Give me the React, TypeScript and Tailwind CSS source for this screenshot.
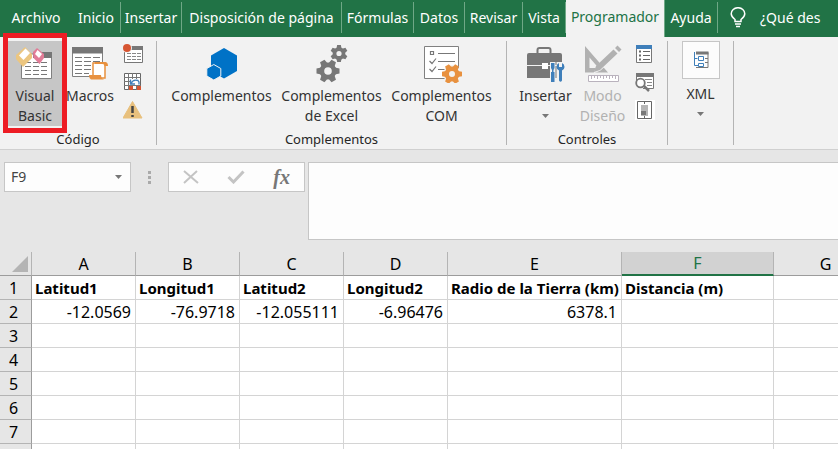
import type { ReactNode } from "react";

const UI = "font-['Noto_Sans',sans-serif]";

type TabItem = { label: string; width: string; active?: boolean; plain?: boolean };

const tabs: TabItem[] = [
  { label: "Archivo", width: "w-[72px]", plain: true },
  { label: "Inicio", width: "w-[49px]" },
  { label: "Insertar", width: "w-[61px]" },
  { label: "Disposición de página", width: "w-[160px]" },
  { label: "Fórmulas", width: "w-[72px]" },
  { label: "Datos", width: "w-[51px]" },
  { label: "Revisar", width: "w-[58px]" },
  { label: "Vista", width: "w-[43px]" },
  { label: "Programador", width: "w-[99px]", active: true },
  { label: "Ayuda", width: "w-[53px]" },
];

function Tabs() {
  return (
    <nav className="flex h-[37px] items-stretch bg-[#217346] text-sm text-white">
      {tabs.map((t) =>
        t.active ? (
          <button key={t.label} className={`${t.width} flex shrink-0 items-start justify-center border-r border-[#6fa886] bg-[#f2f2f2] bg-clip-padding pt-[7px] text-[#217346]`}>
            {t.label}
          </button>
        ) : (
          <button
            key={t.label}
            className={`${t.width} mt-[2px] flex h-[31px] shrink-0 items-center justify-center whitespace-nowrap ${t.plain ? "" : "border-r border-[#6fa886]"}`}
          >
            {t.label}
          </button>
        ),
      )}
      <button className="mt-[2px] flex h-[31px] shrink-0 items-center gap-[14px] pl-3 whitespace-nowrap">
        <svg width="16" height="21" viewBox="0 0 16 21" fill="none" stroke="white" strokeWidth="1.5">
          <path d="M5 14.5v-2C3 11 1.2 9.500 1.200 6.800A6.700 6 0 0 1 14.800 6.800C14.800 9.500 13 11 11 12.500v2z" />
          <path d="M5 17h6M6 19.500h4" />
        </svg>
        ¿Qué des
      </button>
    </nav>
  );
}

function Gear({ cx, cy, r, hole, color, turn = 0 }: { cx: number; cy: number; r: number; hole: number; color: string; turn?: number }) {
  const body = r * 0.74;
  return (
    <g fill={color}>
      <circle cx={cx} cy={cy} r={(body + hole) / 2} fill="none" stroke={color} strokeWidth={body - hole} />
      {Array.from({ length: 6 }, (_, i) => (
        <path
          key={i}
          transform={`rotate(${60 * i + turn} ${cx} ${cy})`}
          d={`M${cx - r * 0.3} ${cy - r * 0.6}L${cx - r * 0.22} ${cy - r}H${cx + r * 0.22}L${cx + r * 0.3} ${cy - r * 0.6}z`}
        />
      ))}
    </g>
  );
}

const VisualBasicIcon = () => (
  <svg width="38" height="34" viewBox="17 45 38 34">
    <path d="M22.500 52h30v24.500h-30z" fill="#fff" stroke="#808080" />
    <path d="M34 50h19v6H34z" fill="#767676" />
    <path d="M26 60.500h24M26 64.500h24M26 68.500h24M26 72.500h24" stroke="#777" strokeDasharray="6 2" />
    <path d="M26 45l7 7v4l-9 9-7-8v-4z" fill="#ecc680" />
    <path d="M26.500 46.500l4.500 4.500-6.500 7-4.500-4.500z" fill="#fff" />
    <path d="M38 46l7 6v4l-4.500 6-6-6-.5-6z" fill="#e27c97" />
    <path d="M38.500 48l4.500 4-3 4-4-4z" fill="#fff" />
  </svg>
);

const MacrosIcon = () => (
  <svg width="38" height="34" viewBox="71 48 38 34">
    <path d="M72.500 48.500h30v29h-30z" fill="#fff" stroke="#808080" />
    <path d="M72 48h31v6.500H72z" fill="#767676" />
    <path d="M75 58.500h25M75 62.500h25M75 66.500h16M75 70.500h16M75 74.500h14" stroke="#777" strokeDasharray="7 2" />
    <path d="M93 64h12v15H93z" fill="#fff" stroke="#e8913f" strokeWidth="1.500" />
    <path d="M95 63h10q3 0 3 4h-3.500q0-2-2-2H95zM89 76h12q0 3 3 4.500H91q-2-1-2-4.500z" fill="#e8913f" />
  </svg>
);

const RecordIcon = () => (
  <svg width="20" height="20" viewBox="123 44 20 20">
    <path d="M124.500 47.500h18v15h-18z" fill="#fff" stroke="#777" />
    <path d="M124 46h19v4h-19z" fill="#777" />
    <path d="M127 53.500h14M127 56.500h14M127 59.500h14" stroke="#888" strokeDasharray="4 1" />
    <circle cx="127" cy="48" r="5" fill="#f2f2f2" />
    <circle cx="127" cy="48" r="4" fill="#d65532" />
  </svg>
);

const RelativeIcon = () => (
  <svg width="20" height="20" viewBox="123 72 20 20">
    <path d="M124.500 73.500h16v16h-16z" fill="#fff" stroke="#666" />
    <path d="M128.500 73v17M132.500 73v6M136.500 73v6M124 77.500h17M124 81.500h6M124 85.500h17M132.500 85v5M136.500 85v5" stroke="#777" />
    <path d="M129 86h4v4h-4zM137 86h4v4h-4z" fill="#d65532" />
    <path d="M130 79h10v6h-10z" fill="#fff" />
    <path d="M131 83.500q2-4.500 7-3 1.500 1 1 4M130.500 79.500v4.500h4.500" fill="none" stroke="#3f7fba" strokeWidth="1.400" />
  </svg>
);

const WarningIcon = () => (
  <svg width="20" height="20" viewBox="123 100 20 20">
    <path d="M132.500 101.500L142 118h-19z" fill="#e8c07d" stroke="#e8c07d" strokeLinejoin="round" />
    <path d="M132.500 106v7M132.500 115v2" stroke="#444" strokeWidth="2.500" />
  </svg>
);

const HexIcon = () => (
  <svg width="34" height="34" viewBox="204 46 34 34" fill="#0072c6">
    <path d="M223 47l13 7.500v15.500l-13 7.500-13-7.500V54.500z" />
    <path d="M212.800 63.500l7 4v7.500l-7 4-7-4v-7.500z" stroke="#f2f2f2" />
  </svg>
);

const GearsIcon = () => (
  <svg width="34" height="38" viewBox="315 44 34 38">
    <Gear cx={328} cy={70} r={11.5} hole={3.800} color="#777" turn={30} />
    <Gear cx={339} cy={52.5} r={8.5} hole={2.600} color="#777" />
  </svg>
);

const ComIcon = () => (
  <svg width="40" height="38" viewBox="422 44 40 38">
    <path d="M424.500 45.500h34v32h-34z" fill="#fff" stroke="#808080" />
    <path d="M430.500 50.500h3v3h-3zM438 52.500h17M438 60.500h17M438 68.500h8M429.500 60l2.500 2.500 4-5M429.500 68l2.500 2.500 4-5" fill="none" stroke="#777" strokeWidth="1.200" />
    <circle cx="452" cy="73" r="9" fill="#f2f2f2" />
    <Gear cx={452} cy={73} r={10} hole={3} color="#e8913f" turn={30} />
  </svg>
);

const ToolboxIcon = () => (
  <svg width="40" height="38" viewBox="527 45 40 38">
    <path d="M538.500 53v-3q0-2 2-2h9q2 0 2 2v3" fill="none" stroke="#777" strokeWidth="2" />
    <path d="M530 53h31q2 0 2 2v23h-35V55q0-2 2-2z" fill="#777" />
    <path d="M528 65.500h35" stroke="#f2f2f2" />
    <path d="M543 63h6v6h-6z" fill="#fff" />
    <path d="M551 62h5.500v20H551zM557.500 62h8v20h-8z" fill="#f2f2f2" />
    <path d="M552 63h3.500v5l-1 2v2h1v10H552V72h1v-2l-1-2z" fill="#3f7fba" />
    <path d="M560 63v4h3v-4q2.500 1 2.500 4 0 2-2.500 3.500v10q-1.500 2.500-3 0v-10q-2.500-1.500-2.500-3.500 0-3 2.500-4z" fill="#3f7fba" />
  </svg>
);

const DesignIcon = () => (
  <svg width="40" height="38" viewBox="582 44 40 38">
    <path d="M584 45l23 26.500h-23zM588.500 56.500v10.500h9z" fill="#b1b1b1" fillRule="evenodd" />
    <path d="M611 48l6 6-17.500 15.500-7 3 3-7z" fill="#f2f2f2" />
    <path d="M616.500 44.500l4 4-2.500 2.500-4-4zM612.500 48.500l4 4-17.500 16.500-6 2 2-6z" fill="#b1b1b1" />
    <path d="M587.500 74.500h30v6h-30z" fill="#fff" stroke="#b9b2bd" />
    <path d="M590.500 75v3M593.500 75v2M596.500 75v3M599.500 75v2M602.500 75v3M605.500 75v2M608.500 75v3M611.500 75v2M614.500 75v3" stroke="#b9b2bd" />
  </svg>
);

const PropertiesIcon = () => (
  <svg width="20" height="20" viewBox="635 44 20 20">
    <path d="M636.500 45.500h15v17h-15z" fill="#fff" stroke="#777" />
    <path d="M636 45h16v4h-16z" fill="#3f7fba" />
    <path d="M643 51.500h7M643 55.500h7M643 59.500h7" stroke="#666" />
    <path d="M639 50.500h2v2h-2zM639 54.500h2v2h-2zM639 58.500h2v2h-2z" fill="#666" />
  </svg>
);

const ViewCodeIcon = () => (
  <svg width="20" height="20" viewBox="634 73 20 20">
    <path d="M635.500 75.500h17v14h-17z" fill="#fff" stroke="#777" />
    <path d="M635 74h18v4h-18z" fill="#777" />
    <path d="M644 80.500h7M646 83.500h5M646 86.500h5" stroke="#888" />
    <path d="M634 85h8v8h-8z" fill="#f2f2f2" />
    <circle cx="639.500" cy="84" r="4.300" fill="#fff" stroke="#777" strokeWidth="1.800" />
    <path d="M643 87l5 5" stroke="#777" strokeWidth="2.500" />
  </svg>
);

const DialogIcon = () => (
  <svg width="20" height="20" viewBox="635 100 20 20">
    <path d="M635 100h20v20h-20z" fill="#fff" />
    <path d="M637.500 101.500h14v17h-14z" fill="#fff" stroke="#666" />
    <path d="M641 105h7v11h-7z" fill="#b5b5b5" />
    <path d="M641 111h5v4h-5z" fill="#777" />
    <path d="M644.500 101v3M644.500 116v3" stroke="#666" />
  </svg>
);

const XmlIcon = () => (
  <svg width="18" height="18" viewBox="692 51 18 18">
    <path d="M696 52.500h12v15h-12" fill="none" stroke="#777" />
    <path d="M696 51.500h12.500v3H696z" fill="#777" />
    <path d="M694.500 52v13.500h4M694.500 58.500h3M698.500 56.500h5v4h-5zM698.500 63.500h5v3h-5z" fill="#fff" stroke="#3f7fba" />
    <path d="M705 58.500h3M705 62.500h3" stroke="#777" />
  </svg>
);

const Caret = () => (
  <svg width="7" height="4" viewBox="0 0 7 4" fill="#777">
    <path d="M0 0h7L3.500 4z" />
  </svg>
);

function Group({ label, className, children }: { label: string; className: string; children: ReactNode }) {
  return (
    <section aria-label={label} className={`${className} flex shrink-0 flex-col border-r border-[#b4b4b4]`}>
      <div className="flex h-[88px] shrink-0 justify-center">{children}</div>
      <div className="flex shrink-0 items-center justify-center text-[13px] leading-5 text-[#262626]">{label}</div>
    </section>
  );
}

function BigButton({ icon, lines, width, tone = "text-[#333]", caret = false }: { icon: ReactNode; lines: string[]; width: string; tone?: string; caret?: boolean }) {
  return (
    <button className={`${width} ${tone} flex h-[85px] shrink-0 flex-col items-center text-sm leading-5`}>
      <span className="flex h-[45px] items-center justify-center">{icon}</span>
      {lines.map((l) => (
        <span key={l} className="whitespace-nowrap">{l}</span>
      ))}
      {caret && (
        <span className="flex h-5 items-center">
          <Caret />
        </span>
      )}
    </button>
  );
}

function SmallButtons({ items }: { items: { label: string; icon: ReactNode }[] }) {
  return (
    <div className="flex shrink-0 flex-col gap-2 pt-[3px]">
      {items.map((i) => (
        <button key={i.label} aria-label={i.label} className="h-5 w-5">
          {i.icon}
        </button>
      ))}
    </div>
  );
}

function Ribbon() {
  return (
    <div className="flex h-[113px] border-b border-[#d0d0d0] bg-[#f2f2f2] pt-1 pb-1">
      <Group label="Código" className="w-[157px]">
        <div className="relative ml-[3px] flex w-16 shrink-0 justify-center">
          <div className="h-[85px] w-[54px] bg-[#c6c6c6]">
            <BigButton icon={<VisualBasicIcon />} lines={["Visual", "Basic"]} width="w-[54px]" />
          </div>
          <div className="pointer-events-none absolute -top-2 left-0 h-[100px] w-16 border-5 border-[#ed1c24]" />
        </div>
        <BigButton icon={<MacrosIcon />} lines={["Macros"]} width="w-[46px]" />
        <div className="w-[43px] shrink-0 pl-[10px]">
          <SmallButtons
            items={[
              { label: "Grabar macro", icon: <RecordIcon /> },
              { label: "Usar referencias relativas", icon: <RelativeIcon /> },
              { label: "Seguridad de macros", icon: <WarningIcon /> },
            ]}
          />
        </div>
      </Group>
      <Group label="Complementos" className="w-[350px]">
        <BigButton icon={<HexIcon />} lines={["Complementos"]} width="w-[110px]" />
        <BigButton icon={<GearsIcon />} lines={["Complementos", "de Excel"]} width="w-[110px]" />
        <BigButton icon={<ComIcon />} lines={["Complementos", "COM"]} width="w-[110px]" />
      </Group>
      <Group label="Controles" className="w-[161px]">
        <BigButton icon={<ToolboxIcon />} lines={["Insertar"]} width="w-[57px]" caret />
        <BigButton icon={<DesignIcon />} lines={["Modo", "Diseño"]} width="w-[57px]" tone="text-[#b1b1b1]" />
        <div className="w-[26px] shrink-0 pl-1">
          <SmallButtons
            items={[
              { label: "Propiedades", icon: <PropertiesIcon /> },
              { label: "Ver código", icon: <ViewCodeIcon /> },
              { label: "Ejecutar cuadro de diálogo", icon: <DialogIcon /> },
            ]}
          />
        </div>
      </Group>
      <section aria-label="XML" className="flex w-[66px] shrink-0 justify-center border-r border-[#b4b4b4]">
        <button className="flex flex-col items-center text-sm leading-5 text-[#333]">
          <span className="mb-[5px] flex h-[38px] w-[38px] items-center justify-center border border-[#c6c6c6] bg-[#fcfcfc]">
            <XmlIcon />
          </span>
          XML
          <span className="flex h-5 items-center">
            <Caret />
          </span>
        </button>
      </section>
    </div>
  );
}

function FormulaBar() {
  return (
    <div className="flex h-[102px] items-start bg-[#e6e6e6] pt-3 pl-1">
      <div className="flex h-[30px] w-[127px] shrink-0 items-center border border-[#c6c6c6] bg-[#fdfdfd] pr-2 pl-1.5">
        <input aria-label="Cuadro de nombres" defaultValue="F9" className="w-full min-w-0 flex-1 bg-transparent text-sm text-[#444] outline-none" />
        <button aria-label="Desplegar nombres">
          <Caret />
        </button>
      </div>
      <div className="flex h-[30px] w-[37px] shrink-0 flex-col items-center justify-center gap-0.5">
        <span className="h-[3px] w-[3px] bg-[#aaa]" />
        <span className="h-[3px] w-[3px] bg-[#aaa]" />
        <span className="h-[3px] w-[3px] bg-[#aaa]" />
      </div>
      <div className="flex h-[30px] w-[137px] shrink-0 items-center justify-around border border-[#c6c6c6] bg-[#fdfdfd]">
        <button aria-label="Cancelar">
          <svg width="16" height="14" viewBox="0 0 16 14" stroke="#c4c4c4" strokeWidth="2">
            <path d="M1 1l14 12M14 1L1 13" />
          </svg>
        </button>
        <button aria-label="Introducir">
          <svg width="18" height="14" viewBox="0 0 18 14" fill="none" stroke="#c4c4c4" strokeWidth="3">
            <path d="M1.500 7l5 5L16.500 1.500" />
          </svg>
        </button>
        <button className="font-['Liberation_Serif',serif] text-xl leading-6 font-bold text-[#777] italic">fx</button>
      </div>
      <textarea aria-label="Barra de fórmulas" className="ml-[3px] h-[78px] min-w-0 flex-1 resize-none border border-r-0 border-[#c6c6c6] bg-[#fdfdfd] outline-none" />
    </div>
  );
}

const columns = [
  { name: "A", width: "w-[104px]" },
  { name: "B", width: "w-[104px]" },
  { name: "C", width: "w-[104px]" },
  { name: "D", width: "w-[104px]" },
  { name: "E", width: "w-[174px]" },
  { name: "F", width: "w-[152px]" },
  { name: "G", width: "w-[104px]" },
];

const data: string[][] = [
  ["Latitud1", "Longitud1", "Latitud2", "Longitud2", "Radio de la Tierra (km)", "Distancia (m)", ""],
  ["-12.0569", "-76.9718", "-12.055111", "-6.96476", "6378.1", "", ""],
];

const rowLabels = ["1", "2", "3", "4", "5", "6", "7", ""];

function Sheet() {
  return (
    <div className="overflow-hidden bg-[#e6e6e6]">
      <table className="w-[878px] table-fixed border-separate border-spacing-0 text-black">
        <thead>
          <tr className="h-6">
            <th aria-label="Seleccionar todo" className="w-8 border-r border-b border-[#9c9c9c] border-r-[#b4b4b4] p-0">
              <svg width="16" height="16" viewBox="0 0 16 16" className="ml-3" fill="#b4b4b4">
                <path d="M16 0v16H0z" />
              </svg>
            </th>
            {columns.map((c) => (
              <th
                key={c.name}
                scope="col"
                className={`${c.width} p-0 text-base leading-[22px] font-normal ${
                  c.name === "F" ? "border-r border-b-2 border-[#217346] border-r-[#b4b4b4] bg-[#d2d2d2] text-[#217346]" : "border-r border-b border-[#9c9c9c] border-r-[#b4b4b4]"
                }`}
              >
                {c.name}
              </th>
            ))}
          </tr>
        </thead>
        <tbody>
          {rowLabels.map((label, r) => (
            <tr key={r} className="h-6">
              <th scope="row" className="border-r border-b border-[#b4b4b4] border-r-[#9c9c9c] p-0 pr-1 text-base leading-[22px] font-normal">
                {label}
              </th>
              {columns.map((c, i) => (
                <td
                  key={c.name}
                  className={`border-r border-b border-[#d4d4d4] bg-white p-0 leading-[22px] whitespace-nowrap ${
                    r === 0 ? "pl-[3px] text-[15px] font-bold" : "pr-1 text-right text-base"
                  }`}
                >
                  {data[r]?.[i] ?? ""}
                </td>
              ))}
            </tr>
          ))}
        </tbody>
      </table>
    </div>
  );
}

export default function App() {
  return (
    <main className={`${UI} h-screen overflow-hidden bg-[#e6e6e6]`}>
      <Tabs />
      <Ribbon />
      <FormulaBar />
      <Sheet />
    </main>
  );
}
